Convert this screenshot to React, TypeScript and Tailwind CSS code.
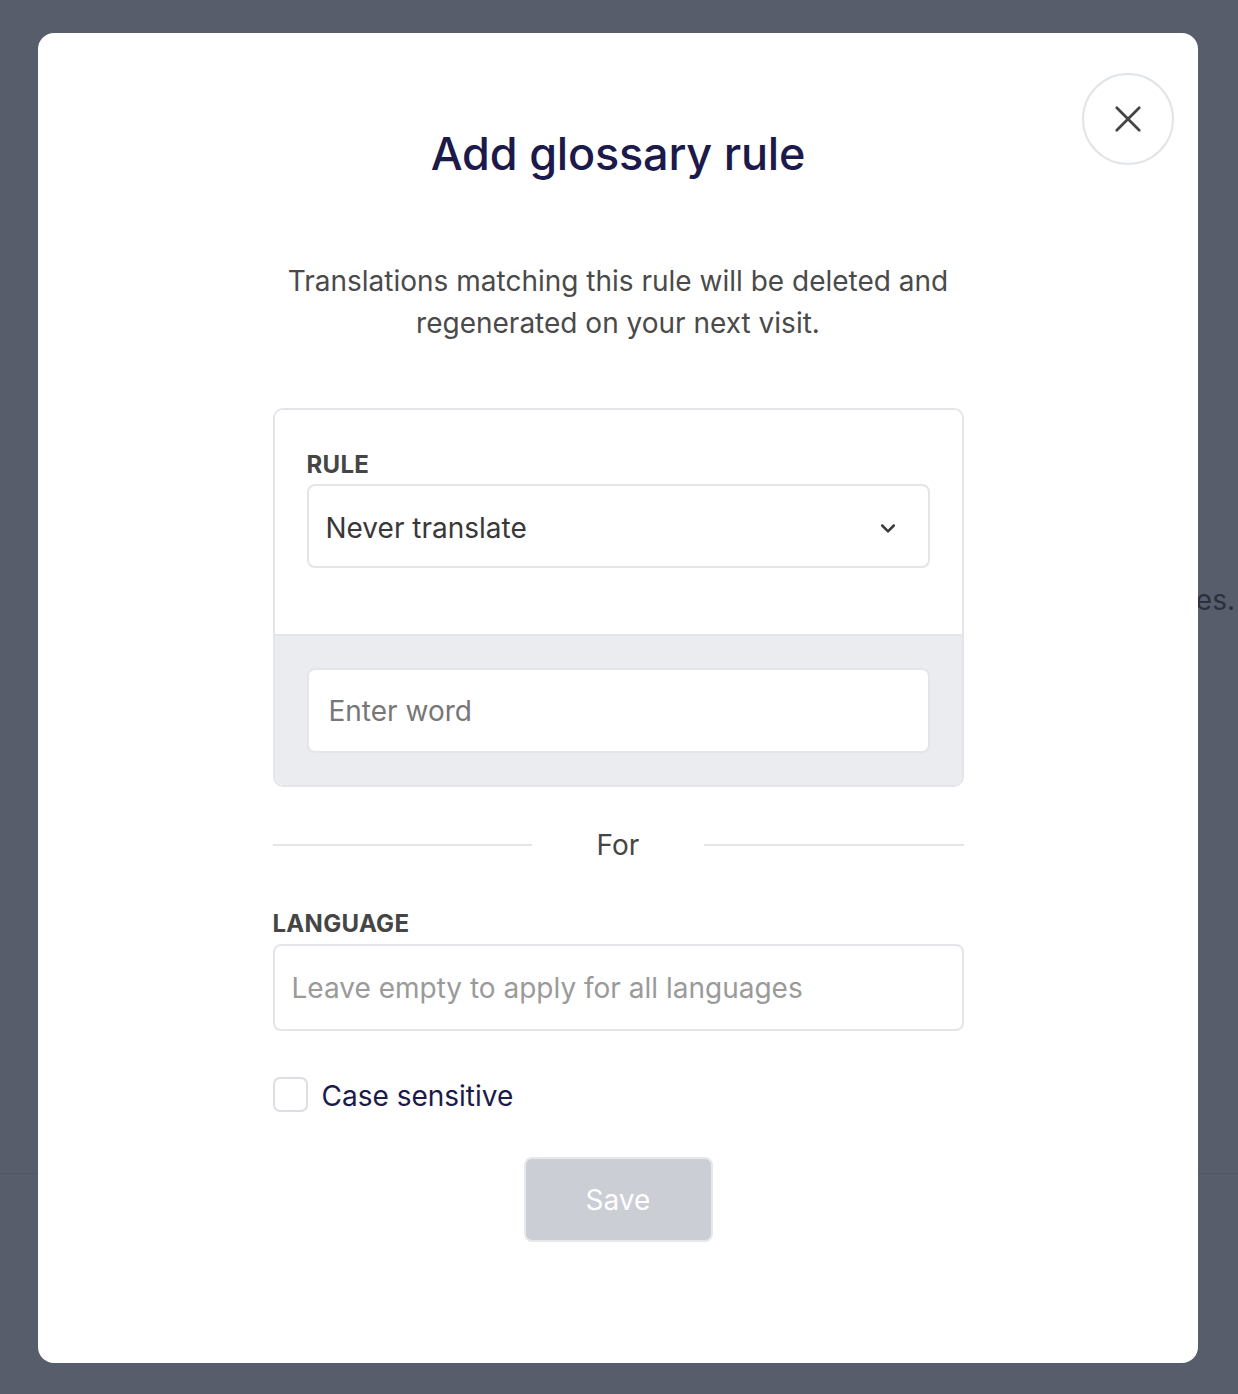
import React from "react";

export default function App() {
  return (
    <div
      className="relative w-[1238px] h-[1394px] overflow-hidden bg-[#575d6b]"
      style={{ fontFamily: "Inter, 'Noto Sans', sans-serif" }}
    >
      {/* background page (dimmed) */}
      <div className="absolute left-0 top-0 w-full h-[1174px] border-b border-[#4f5563]" />
      <div className="absolute right-[3px] top-[579px] text-[28px] text-[#2b303c]">languages.</div>

      {/* modal */}
      <div className="absolute left-[38px] top-[33px] w-[1160px] h-[1330px] bg-white rounded-[16px] flex flex-col items-center">
        <button className="absolute right-[24px] top-[40px] w-[92px] h-[92px] rounded-full border-2 border-[#e1e4e8] flex items-center justify-center">
          <svg width="30" height="30" viewBox="0 0 24 24" fill="none" stroke="#454545" strokeWidth="2.2" strokeLinecap="round">
            <path d="M3 3L21 21M21 3L3 21" />
          </svg>
        </button>

        <h1 className="mt-[93px] text-[45px] leading-[56px] font-medium text-[#1b1a4a] tracking-[-0.2px]">Add glossary rule</h1>

        <p className="mt-[78px] text-center text-[28px] leading-[42px] text-[#4a4a4a]">
          Translations matching this rule will be deleted and
          <br />
          regenerated on your next visit.
        </p>

        <div className="mt-[64px] w-[691px] flex flex-col">
          <div className="border-2 border-[#e3e5e9] rounded-[10px] overflow-hidden">
            <div className="bg-white px-[32px] pt-[40px] pb-[66px]">
              <div className="text-[24px] leading-[30px] font-bold text-[#454545] tracking-[0.3px]">RULE</div>
              <div className="mt-[4px] h-[84px] border-2 border-[#e3e5e9] rounded-[8px] flex items-center justify-between pl-[17px] pr-[30px] pt-[4px]">
                <span className="text-[28px] text-[#383838]">Never translate</span>
                <svg width="20" height="20" viewBox="0 0 24 24" fill="none" stroke="#3a3a3a" strokeWidth="3" strokeLinecap="round" strokeLinejoin="round">
                  <path d="M5 9l7 7 7-7" />
                </svg>
              </div>
            </div>
            <div className="bg-[#ebecf0] border-t-2 border-[#e3e5e9] px-[32px] pt-[32px] pb-[32px]">
              <div className="h-[85px] bg-white border-2 border-[#e3e5e9] rounded-[8px] flex items-center pl-[20px]">
                <span className="text-[28px] text-[#777777]">Enter word</span>
              </div>
            </div>
          </div>

          <div className="mt-[38px] flex items-center">
            <div className="flex-1 h-[2px] bg-[#e3e5e9]" />
            <span className="w-[172px] text-center text-[28px] leading-[40px] text-[#454545]">For</span>
            <div className="flex-1 h-[2px] bg-[#e3e5e9]" />
          </div>

          <div className="mt-[44px] text-[24px] leading-[30px] font-bold text-[#454545] tracking-[0.3px]">LANGUAGE</div>
          <div className="mt-[5px] h-[87px] border-2 border-[#e3e5e9] rounded-[8px] flex items-center pl-[17px]">
            <span className="text-[28px] text-[#9a9a9a]">Leave empty to apply for all languages</span>
          </div>

          <div className="mt-[40px] flex items-center">
            <div className="w-[35px] h-[35px] border-2 border-[#dcdee2] rounded-[7px]" />
            <span className="ml-[14px] pt-[4px] text-[28px] text-[#1b1a4a]">Case sensitive</span>
          </div>

          <div className="mt-[40px] flex justify-center">
            <button className="w-[189px] h-[85px] bg-[#cbced4] border-2 border-[#e6e8eb] rounded-[8px] text-white text-[28px]">
              Save
            </button>
          </div>
        </div>
      </div>
    </div>
  );
}
